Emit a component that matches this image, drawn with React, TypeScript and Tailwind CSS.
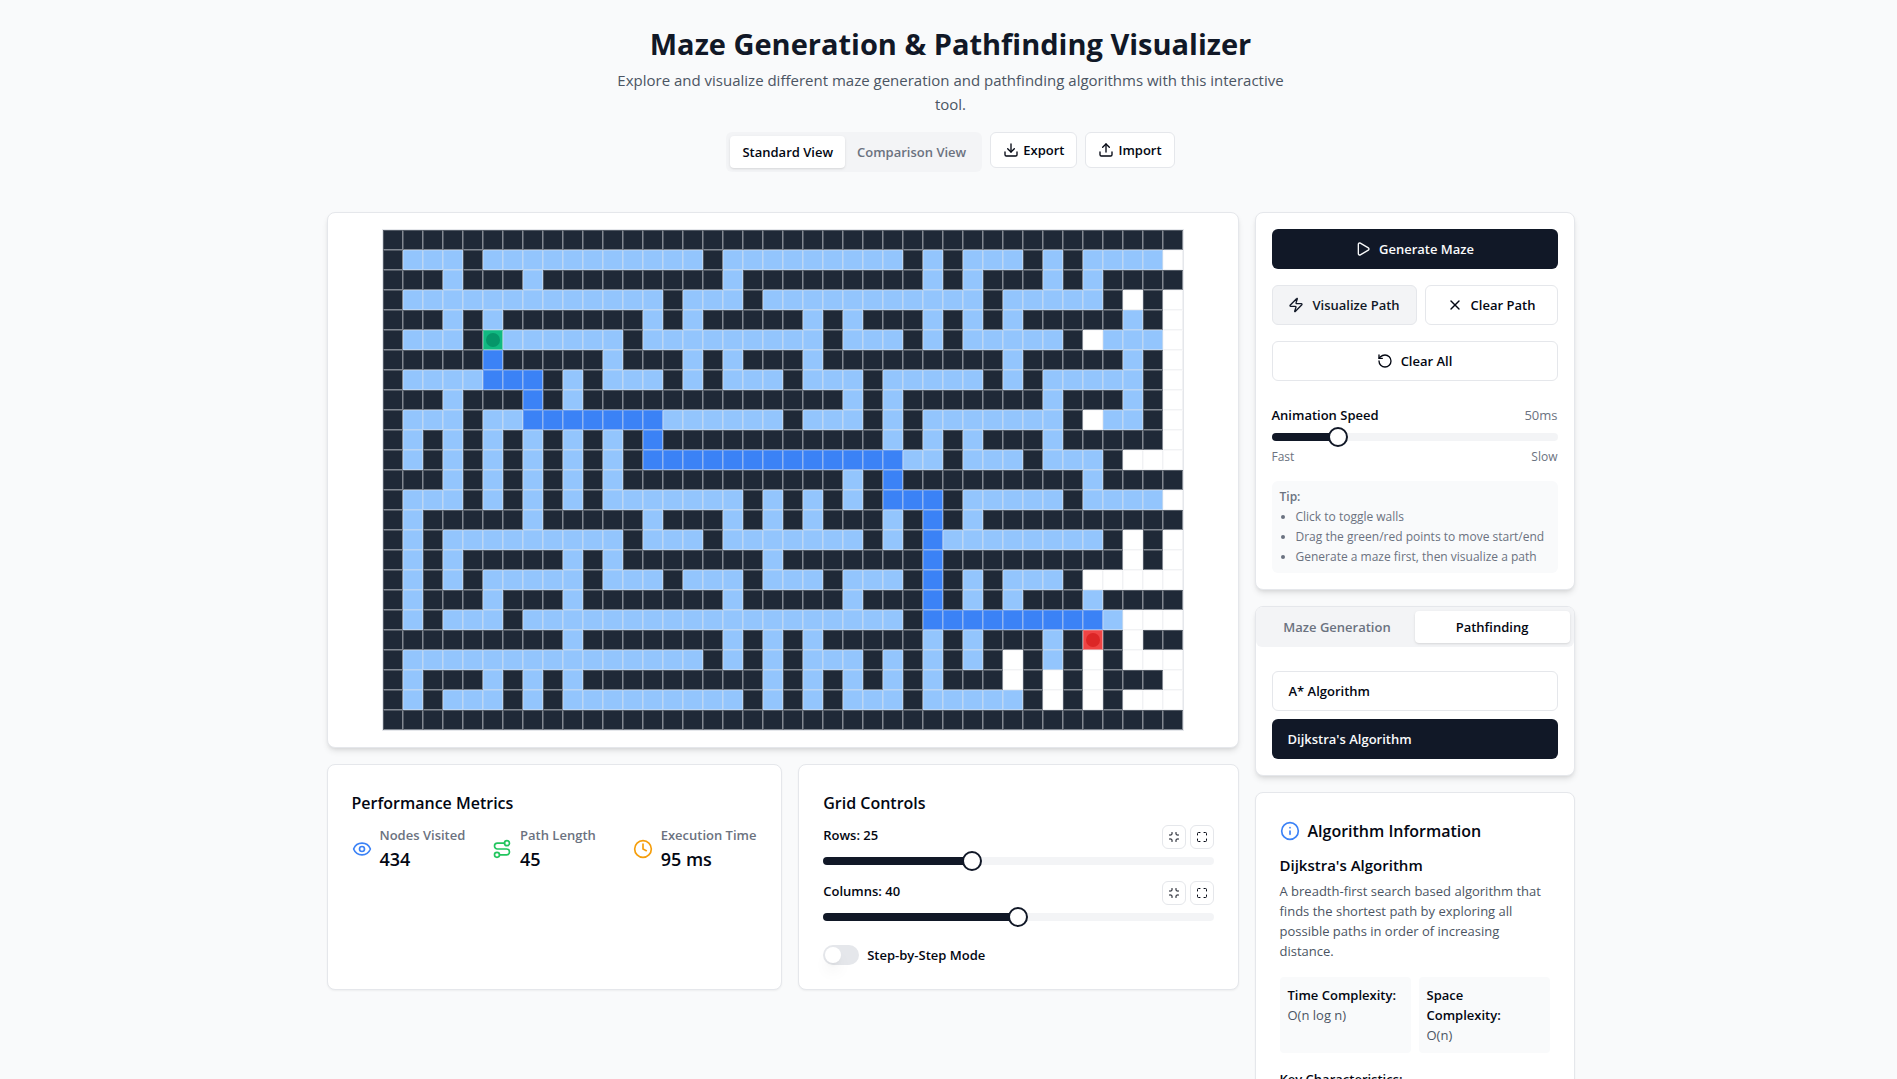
import { useState } from "react";
import type { ReactNode } from "react";
import {
  Clock,
  Download,
  Eye,
  Info,
  Maximize,
  Minimize,
  Play,
  RotateCcw,
  Route,
  Upload,
  X,
  Zap,
} from "lucide-react";

// Legend: # wall, . visited, * shortest path, o open, S start, E end
const MAZE = [
  "########################################",
  "#...#...........#.........#.#...#.#....o",
  "###.###.#########.#########.#.###.#.####",
  "#.............#...#...........#.....#o#o",
  "###.#.#######.#.#####.#.###.#.#.#####.#o",
  "#...#S......#.........#...#.#.....#o...o",
  "#####*#####.###.#.###.#########.#####.#o",
  "#....***#.#...#.#...#...#.....#.#.....#o",
  "###.###*#.#############.#.#######.###.#o",
  "#...#..*******......#...#.#.......#o..#o",
  "#.#.#.#.#.#.#*###########.#.#.###.#####o",
  "#.#.#.#.#.#.#*************..#...#...#ooo",
  "###.#.#.#.#.###########.#*#########.####",
  "#...#.#.#.#.......#.#.#.#***#.....#....o",
  "#.#####.#####.###.#.#.###.#*#.##########",
  "#.#.........#...#.......#.#*........#o#o",
  "#.#.#####.#.#######.#######*#########o#o",
  "#.#.#.....#...#...#...#...#*#.#...#ooooo",
  "#.###.###.#######.#####.###*#.#.###.####",
  "#.#...#...................#*********.ooo",
  "#########.#######.#.#.#####.#.###.#E#o##",
  "#...............#.#.#...#.#.#.#o#.#o#ooo",
  "#.###.#.#.#########.#.#.#.#.###o#o#o###o",
  "#.#...#.#.........#.#.#...#.....#o#o#ooo",
  "########################################",
];

const CELL_COLORS: Record<string, string> = {
  "#": "bg-[#1f2937]",
  ".": "bg-[#93c5fd]",
  "*": "bg-[#3b82f6]",
  o: "bg-white",
  S: "bg-[#10b981]",
  E: "bg-[#ef4444]",
};

const card = "rounded-lg border border-[#e5e7eb] bg-white";
const button =
  "flex items-center justify-center rounded-md text-[13px]/5 font-semibold";
const outline = "border border-[#e5e7eb] bg-white text-[#030712]";
const solid = "bg-[#111827] text-[#f9fafb]";

function Cell({ kind }: { kind: string }) {
  return (
    <div
      className={`flex size-5 items-center justify-center border border-t-[#e5e7eb]/25 border-r-[#e5e7eb]/50 border-b-[#e5e7eb]/50 border-l-[#e5e7eb]/25 ${CELL_COLORS[kind]}`}
    >
      {kind === "S" && <span className="size-3.5 rounded-full bg-[#059669]" />}
      {kind === "E" && <span className="size-3.5 rounded-full bg-[#dc2626]" />}
    </div>
  );
}

function Slider({
  label,
  value,
  min,
  max,
  onChange,
}: {
  label: string;
  value: number;
  min: number;
  max: number;
  onChange: (value: number) => void;
}) {
  const percent = ((value - min) / (max - min)) * 100;
  return (
    <input
      type="range"
      aria-label={label}
      min={min}
      max={max}
      value={value}
      onChange={(event) => onChange(Number(event.target.value))}
      style={{
        backgroundImage: `linear-gradient(to right, #111827 ${percent}%, #f3f4f6 ${percent}%)`,
      }}
      className="mt-2 block h-2 w-full appearance-none rounded-full [&::-webkit-slider-thumb]:size-5 [&::-webkit-slider-thumb]:appearance-none [&::-webkit-slider-thumb]:rounded-full [&::-webkit-slider-thumb]:border-2 [&::-webkit-slider-thumb]:border-[#111827] [&::-webkit-slider-thumb]:bg-white"
    />
  );
}

function Metric({
  icon,
  label,
  value,
}: {
  icon: ReactNode;
  label: string;
  value: string;
}) {
  return (
    <div className="flex items-center gap-2">
      {icon}
      <div className="whitespace-nowrap">
        <p className="text-[13px]/5 font-semibold text-[#6b7280]">{label}</p>
        <p className="text-lg font-semibold">{value}</p>
      </div>
    </div>
  );
}

function SizeControl({
  name,
  value,
  min,
  max,
  onChange,
}: {
  name: string;
  value: number;
  min: number;
  max: number;
  onChange: (value: number) => void;
}) {
  const step = `${button} ${outline} size-6`;
  return (
    <div>
      <div className="flex justify-between">
        <span className="text-[13px]/5 font-semibold">
          {name}: {value}
        </span>
        <div className="flex gap-1">
          <button
            aria-label={`Fewer ${name}`}
            className={step}
            onClick={() => onChange(Math.max(min, value - 1))}
          >
            <Minimize className="size-3" />
          </button>
          <button
            aria-label={`More ${name}`}
            className={step}
            onClick={() => onChange(Math.min(max, value + 1))}
          >
            <Maximize className="size-3" />
          </button>
        </div>
      </div>
      <Slider label={name} value={value} min={min} max={max} onChange={onChange} />
    </div>
  );
}

export default function App() {
  const [speed, setSpeed] = useState(50);
  const [rows, setRows] = useState(25);
  const [columns, setColumns] = useState(40);
  const [stepMode, setStepMode] = useState(false);

  return (
    <div className="min-h-screen bg-[#f9fafb] pl-1 font-['Open_Sans',sans-serif] text-[#030712]">
      <main className="mx-auto max-w-7xl px-4 py-6">
        <header className="mb-10 flex flex-col items-center text-center">
          <h1 className="text-[29px]/10 font-bold text-[#111827]">
            Maze Generation &amp; Pathfinding Visualizer
          </h1>
          <p className="mt-1 max-w-2xl text-[15px]/6 text-[#4b5563]">
            Explore and visualize different maze generation and pathfinding
            algorithms with this interactive tool.
          </p>
          <div className="mt-4 flex items-start gap-2">
            <div role="tablist" className="flex h-10 rounded-md bg-[#f3f4f6] p-1 text-[13px]/5 font-semibold">
              <button role="tab" aria-selected="true" className="rounded-sm bg-white px-3 shadow-sm">
                Standard View
              </button>
              <button role="tab" aria-selected="false" className="px-3 text-[#6b7280]">
                Comparison View
              </button>
            </div>
            <button className={`${button} ${outline} h-9 gap-1 px-3`}>
              <Download className="size-4" />
              Export
            </button>
            <button className={`${button} ${outline} h-9 gap-1 px-3`}>
              <Upload className="size-4" />
              Import
            </button>
          </div>
        </header>

        <div className="flex items-start gap-4">
          <div className="min-w-0 flex-1 space-y-4">
            <section className={`${card} flex justify-center p-4 shadow-md`}>
              <div className="border border-[#e5e7eb]">
                {MAZE.map((line, r) => (
                  <div key={r} className="flex">
                    {line.split("").map((kind, c) => (
                      <Cell key={c} kind={kind} />
                    ))}
                  </div>
                ))}
              </div>
            </section>

            <div className="grid grid-cols-[1.035fr_1fr] gap-4">
              <section className={`${card} p-6 shadow-xs`}>
                <h2 className="text-base/7 font-semibold">Performance Metrics</h2>
                <div className="mt-2 grid grid-cols-3 gap-4">
                  <Metric icon={<Eye className="size-5 text-[#3b82f6]" />} label="Nodes Visited" value="434" />
                  <Metric icon={<Route className="size-5 text-[#22c55e]" />} label="Path Length" value="45" />
                  <Metric icon={<Clock className="size-5 text-[#f59e0b]" />} label="Execution Time" value="95 ms" />
                </div>
              </section>

              <section className={`${card} p-6 shadow-xs`}>
                <h2 className="text-base/7 font-semibold">Grid Controls</h2>
                <div className="mt-2 space-y-4">
                  <SizeControl name="Rows" value={rows} min={10} max={50} onChange={setRows} />
                  <SizeControl name="Columns" value={columns} min={10} max={70} onChange={setColumns} />
                </div>
                <label className="mt-6 flex items-center gap-2 text-[13px]/5 font-semibold">
                  <input
                    type="checkbox"
                    role="switch"
                    checked={stepMode}
                    onChange={(event) => setStepMode(event.target.checked)}
                    className="h-5 w-9 appearance-none rounded-full border-2 border-transparent bg-[#e5e7eb] before:block before:size-4 before:rounded-full before:bg-white before:shadow-lg checked:bg-[#111827] checked:before:translate-x-4"
                  />
                  Step-by-Step Mode
                </label>
              </section>
            </div>
          </div>

          <aside className="w-80 shrink-0 space-y-4">
            <section className={`${card} p-4 shadow-md`}>
              <button className={`${button} ${solid} h-10 w-full gap-2`}>
                <Play className="size-4" />
                Generate Maze
              </button>
              <div className="mt-4 grid grid-cols-[12fr_11fr] gap-2">
                <button className={`${button} h-10 gap-2 border border-[#e5e7eb] bg-[#f3f4f6] text-[#111827]`}>
                  <Zap className="size-4" />
                  Visualize Path
                </button>
                <button className={`${button} ${outline} h-10 gap-2`}>
                  <X className="size-4" />
                  Clear Path
                </button>
              </div>
              <button className={`${button} ${outline} mt-4 h-10 w-full gap-2`}>
                <RotateCcw className="size-4" />
                Clear All
              </button>
              <div className="mt-6 flex justify-between text-[13px]/5">
                <span className="font-semibold">Animation Speed</span>
                <span className="text-[#6b7280]">{speed}ms</span>
              </div>
              <Slider label="Animation Speed" value={speed} min={10} max={200} onChange={setSpeed} />
              <div className="mt-2 flex justify-between text-xs text-[#6b7280]">
                <span>Fast</span>
                <span>Slow</span>
              </div>
              <div className="mt-4 rounded-md bg-[#f9fafb] p-2 text-xs text-[#6b7280]">
                <p className="font-semibold">Tip:</p>
                <ul className="mt-1 list-disc space-y-1 pl-4">
                  <li>Click to toggle walls</li>
                  <li>Drag the green/red points to move start/end</li>
                  <li>Generate a maze first, then visualize a path</li>
                </ul>
              </div>
            </section>

            <section className={`${card} shadow-md`}>
              <div role="tablist" className="grid h-10 grid-cols-2 rounded-md bg-[#f3f4f6] p-1 text-[13px]/5 font-semibold">
                <button role="tab" aria-selected="false" className="text-[#6b7280]">
                  Maze Generation
                </button>
                <button role="tab" aria-selected="true" className="rounded-sm bg-white shadow-sm">
                  Pathfinding
                </button>
              </div>
              <div className="space-y-2 p-4 pt-6">
                <button className={`${outline} block h-10 w-full rounded-md px-4 text-left text-[13px]/5 font-semibold`}>
                  A* Algorithm
                </button>
                <button className={`${solid} block h-10 w-full rounded-md px-4 text-left text-[13px]/5 font-semibold`}>
                  Dijkstra's Algorithm
                </button>
              </div>
            </section>

            <section className={`${card} p-6 shadow-xs`}>
              <h2 className="flex items-center gap-2 text-base/7 font-semibold">
                <Info className="size-5 text-[#3b82f6]" />
                Algorithm Information
              </h2>
              <h3 className="mt-2 text-[15px]/6 font-semibold">Dijkstra's Algorithm</h3>
              <p className="mt-1 text-[13px]/5 text-[#4b5563]">
                A breadth-first search based algorithm that finds the shortest
                path by exploring all possible paths in order of increasing
                distance.
              </p>
              <div className="mt-4 grid grid-cols-2 gap-2 text-[13px]/5">
                <div className="rounded bg-[#f9fafb] p-2">
                  <p className="font-semibold">Time Complexity:</p>
                  <p className="text-[#4b5563]">O(n log n)</p>
                </div>
                <div className="rounded bg-[#f9fafb] p-2">
                  <p className="font-semibold">
                    Space
                    <br />
                    Complexity:
                  </p>
                  <p className="text-[#4b5563]">O(n)</p>
                </div>
              </div>
              <h4 className="mt-4 text-[13px]/5 font-semibold">Key Characteristics:</h4>
            </section>
          </aside>
        </div>
      </main>
    </div>
  );
}
